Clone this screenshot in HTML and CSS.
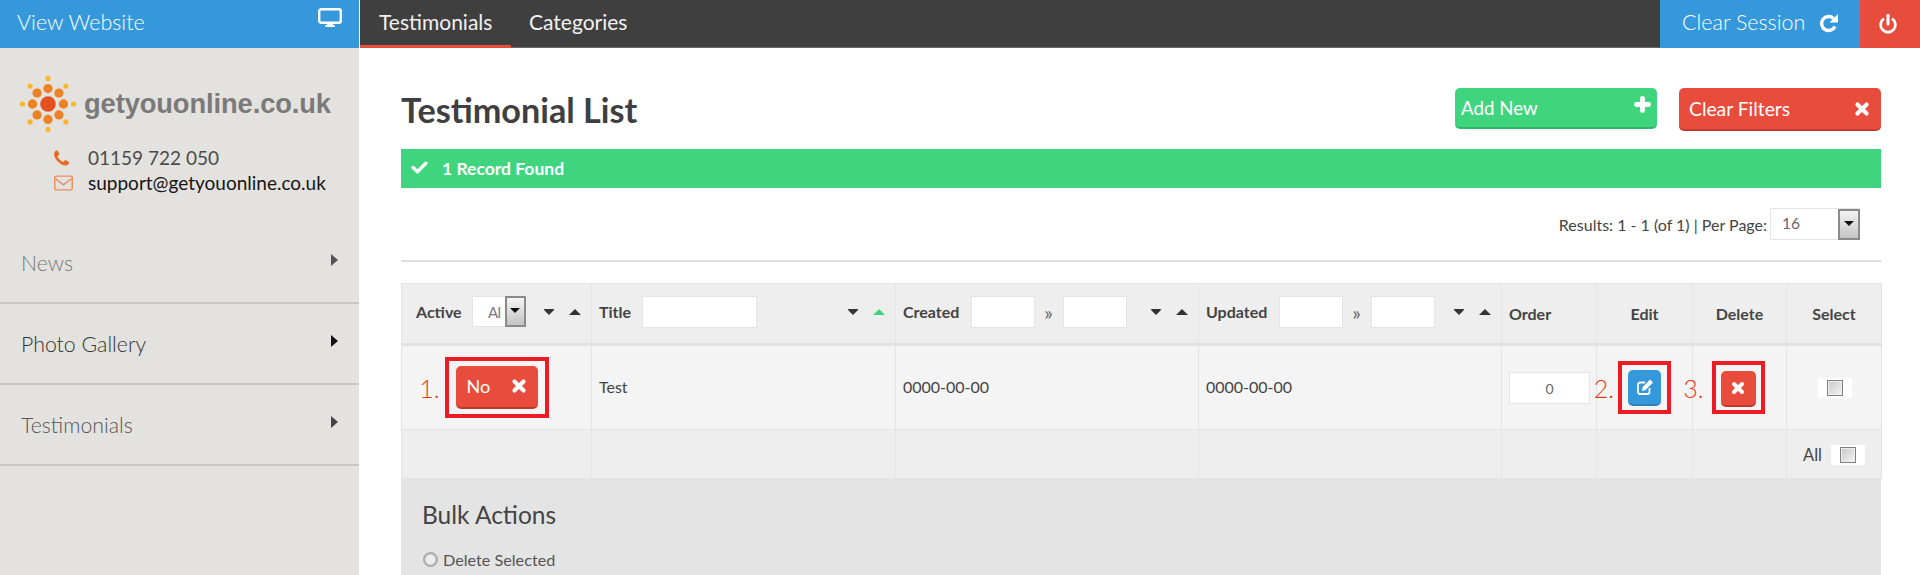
FILE: index.html
```html
<!DOCTYPE html>
<html lang="en">
<head>
<meta charset="utf-8">
<title>Testimonial List</title>
<link rel="stylesheet" href="styles.css">
</head>
<body>
<div class="app">
  <aside class="sidebar">
    <a class="view-site"><span>View Website</span>
      <svg class="ic-desktop" viewBox="0 0 24 20"><rect x="1.2" y="1.2" width="21.6" height="13.6" rx="2" fill="none" stroke="#fff" stroke-width="2.4"/><rect x="9" y="15" width="6" height="3" fill="#fff"/><rect x="7" y="17" width="10" height="2" rx="1" fill="#fff"/></svg>
    </a>
    <div class="brand">
      <svg class="sun" viewBox="0 0 60 60">
        <circle cx="30" cy="30" r="8" fill="#e2511f"/>
        <g fill="#ec8224"><circle cx="30" cy="14" r="4.8"/><circle cx="30" cy="46" r="4.8"/><circle cx="14" cy="30" r="4.8"/><circle cx="46" cy="30" r="4.8"/><circle cx="18.7" cy="18.7" r="4.8"/><circle cx="41.3" cy="18.7" r="4.8"/><circle cx="18.7" cy="41.3" r="4.8"/><circle cx="41.3" cy="41.3" r="4.8"/></g>
        <g fill="#fbb62a"><circle cx="30" cy="3.5" r="2.7"/><circle cx="30" cy="56.5" r="2.7"/><circle cx="3.5" cy="30" r="2.7"/><circle cx="56.5" cy="30" r="2.7"/><circle cx="11.5" cy="11.5" r="2.7"/><circle cx="48.5" cy="11.5" r="2.7"/><circle cx="11.5" cy="48.5" r="2.7"/><circle cx="48.5" cy="48.5" r="2.7"/></g>
      </svg>
      <span class="brand-name">getyouonline.co.uk</span>
    </div>
    <div class="contact">
      <div class="contact-row phone">
        <svg class="ic-contact" viewBox="0 0 1408 1408"><path fill="#ea6a20" d="M1408 1112q0 27-10 70.5t-21 68.5q-21 50-122 106-94 51-186 51-27 0-53-3.5t-57.5-12.5-47-14.5-55.5-20.5-49-18q-98-35-175-83-127-79-264-216t-216-264q-48-77-83-175-3-9-18-49t-20.5-55.5-14.5-47-12.5-57.5-3.5-53q0-92 51-186 56-101 106-122 25-11 68.5-21t70.5-10q14 0 21 3 18 6 53 76 11 19 30 54t35 63.5 31 53.5q3 4 17.5 25t21.5 35.5 7 28.5q0 20-28.5 50t-62 55-62 53-28.5 46q0 9 5 22.5t8.5 20.5 14 24 11.5 19q76 137 174 235t235 174q2 1 19 11.5t24 14 20.5 8.5 22.5 5q18 0 46-28.5t53-62 55-62 50-28.5q14 0 28.5 7t35.5 21.5 25 17.5q25 15 53.5 31t63.5 35 54 30q70 35 76 53 3 7 3 21z"/></svg>
        <span>01159 722 050</span>
      </div>
      <div class="contact-row mail">
        <svg class="ic-contact" viewBox="0 0 20 16"><rect x="0.8" y="0.8" width="18.4" height="14.4" rx="1.5" fill="none" stroke="#ec8a5c" stroke-width="1.5"/><path d="M1.5 3.5 L10 10 L18.5 3.5" fill="none" stroke="#ec8a5c" stroke-width="1.5"/></svg>
        <span>support@getyouonline.co.uk</span>
      </div>
    </div>
    <nav class="side-nav">
      <a class="side-item item-news"><span>News</span><i class="tri-right"></i></a>
      <a class="side-item item-photo"><span>Photo Gallery</span><i class="tri-right"></i></a>
      <a class="side-item item-test"><span>Testimonials</span><i class="tri-right"></i></a>
    </nav>
  </aside>

  <main class="main">
    <header class="topbar">
      <a class="tab tab-active">Testimonials</a>
      <a class="tab">Categories</a>
      <a class="clear-session"><span>Clear Session</span>
        <svg class="ic-refresh" viewBox="0 0 20 20"><path d="M16 13.500 A7 7 0 1 1 14.500 5.500" fill="none" stroke="#fff" stroke-width="3.400"/><path d="M19 1 V9.500 H10.500 Z" fill="#fff"/></svg>
      </a>
      <a class="logout">
        <svg class="ic-power" viewBox="0 0 20 20"><path d="M6 4.6 A7.4 7.4 0 1 0 14 4.6" fill="none" stroke="#fff" stroke-width="2.8"/><path d="M10 1 V10" stroke="#fff" stroke-width="3" stroke-linecap="round"/></svg>
      </a>
    </header>

    <div class="content">
      <div class="page-head">
        <h1>Testimonial List</h1>
        <div class="head-actions">
          <a class="btn btn-green btn-add"><span>Add New</span>
            <svg class="ic-plus" viewBox="0 0 14 14"><path d="M7 2 V12 M2 7 H12" stroke="#fff" stroke-width="4" stroke-linecap="round"/></svg>
          </a>
          <a class="btn btn-red btn-clear"><span>Clear Filters</span>
            <svg class="ic-x ic-x-big" viewBox="0 0 14 14"><path d="M3 3 L11 11 M11 3 L3 11" stroke="#fff" stroke-width="3.6" stroke-linecap="round"/></svg>
          </a>
        </div>
      </div>

      <div class="notice">
        <svg class="ic-check" viewBox="0 0 16 12"><path d="M2 6 L6 10 L14 2" fill="none" stroke="#fff" stroke-width="3.2" stroke-linecap="round" stroke-linejoin="round"/></svg>
        <span>1 Record Found</span>
      </div>

      <div class="results">
        <span>Results: 1 - 1 (of 1) | Per Page:</span>
        <span class="fake-select select-page"><span class="select-value">16</span><span class="select-btn"><i class="tri-down-sm"></i></span></span>
      </div>
      <hr class="rule">

      <table class="grid">
        <colgroup>
          <col class="c-active"><col class="c-title"><col class="c-date"><col class="c-date"><col class="c-order"><col class="c-edit"><col class="c-del"><col class="c-sel">
        </colgroup>
        <thead>
          <tr>
            <th><div class="filter filter-first"><span>Active</span>
              <span class="fake-select select-active"><span class="select-value">Al</span><span class="select-btn"><i class="tri-down-sm"></i></span></span>
              <span class="sorts"><i class="tri-down"></i><i class="tri-up"></i></span></div></th>
            <th><div class="filter"><span>Title</span><span class="field field-title"></span>
              <span class="sorts"><i class="tri-down"></i><i class="tri-up tri-on"></i></span></div></th>
            <th><div class="filter"><span>Created</span><span class="field field-date"></span><span class="raquo">»</span><span class="field field-date"></span>
              <span class="sorts"><i class="tri-down"></i><i class="tri-up"></i></span></div></th>
            <th><div class="filter"><span>Updated</span><span class="field field-date"></span><span class="raquo">»</span><span class="field field-date"></span>
              <span class="sorts"><i class="tri-down"></i><i class="tri-up"></i></span></div></th>
            <th class="th-order">Order</th>
            <th class="center">Edit</th>
            <th class="center">Delete</th>
            <th class="center">Select</th>
          </tr>
        </thead>
        <tbody>
          <tr class="row-data">
            <td class="center"><span class="mark mark-wide"><b class="step step-1">1.</b>
              <a class="btn btn-red btn-no"><span>No</span><svg class="ic-x" viewBox="0 0 14 14"><path d="M3 3 L11 11 M11 3 L3 11" stroke="#fff" stroke-width="3.6" stroke-linecap="round"/></svg></a></span></td>
            <td class="pad">Test</td>
            <td class="pad">0000-00-00</td>
            <td class="pad">0000-00-00</td>
            <td class="cell-order"><span class="order-input">0</span></td>
            <td class="center"><span class="mark mark-sq"><b class="step">2.</b>
              <a class="btn-icon btn-blue"><svg class="ic-edit" viewBox="0 0 18 18"><path d="M13.5 10 V14 A2 2 0 0 1 11.5 16 H4 A2 2 0 0 1 2 14 V6.500 A2 2 0 0 1 4 4.500 H9" fill="none" stroke="#fff" stroke-width="1.800"/><path d="M14 1.500 L17 4.500 L9.500 12 L6 13 L6.700 9 Z" fill="#fff"/></svg></a></span></td>
            <td class="center"><span class="mark mark-sq mark-del"><b class="step step-3">3.</b>
              <a class="btn-icon btn-del"><svg class="ic-x ic-x-sm" viewBox="0 0 14 14"><path d="M3 3 L11 11 M11 3 L3 11" stroke="#fff" stroke-width="4" stroke-linecap="round"/></svg></a></span></td>
            <td class="center"><span class="check-wrap check-sel"><span class="check"></span></span></td>
          </tr>
          <tr class="row-foot">
            <td></td><td></td><td></td><td></td><td></td><td></td><td></td>
            <td class="cell-all"><span class="all-label">All</span><span class="check-wrap"><span class="check"></span></span></td>
          </tr>
        </tbody>
      </table>

      <section class="bulk">
        <h2>Bulk Actions</h2>
        <label class="radio-row"><span class="radio"></span>Delete Selected</label>
      </section>
    </div>
  </main>
</div>
</body>
</html>
```

FILE: styles.css
```css
* { box-sizing: border-box; }
html, body { margin: 0; height: 100%; overflow: hidden; background: #fff; }
body { font-family: Lato, "Liberation Sans", sans-serif; color: #444; font-size: 15px; }
a { text-decoration: none; color: inherit; }
i { display: block; }

.app { display: flex; height: 575px; overflow: hidden; }

/* Sidebar */
.sidebar { width: 359px; flex: none; background: #e3e2de; }
.view-site { height: 48px; background: #3498db; color: #fff; display: flex; justify-content: space-between; padding: 0 17px; font-size: 21.500px; font-weight: 300; line-height: 44px; }
.ic-desktop { width: 24px; height: 20px; margin-top: 8px; }
.brand { display: flex; align-items: center; margin: 26px 0 0 19px; height: 60px; }
.sun { width: 58px; height: 58px; flex: none; }
.brand-name { margin-left: 7px; font-family: "Liberation Sans", sans-serif; font-weight: 700; font-size: 27.300px; color: #7b7a7a; letter-spacing: -0.1px; }
.contact { margin: 11px 0 0 54px; }
.contact-row { display: flex; align-items: center; height: 25px; font-size: 19px; }
.contact-row span { margin-left: 15px; }
.phone { color: #4b4b4b; }
.mail { color: #151515; }
.phone span { margin-left: 19px; }
.ic-contact { width: 19px; height: 16px; flex: none; }
.phone .ic-contact { width: 15px; height: 16px; }
.side-nav { margin-top: 28px; }
.side-item { display: flex; justify-content: space-between; align-items: center; height: 81px; padding: 0 21px; border-bottom: 2px solid #c8c7c4; font-size: 21.300px; font-weight: 300; }
.item-news { color: #777; }
.item-photo { color: #333; }
.item-test { color: #555; }
.tri-right { width: 0; height: 0; border-left: 7px solid #333; border-top: 6.500px solid transparent; border-bottom: 6.500px solid transparent; margin: -6px 0 0; }
.item-news .tri-right { border-left-color: #555; }
.item-photo .tri-right { border-left-color: #111; }
.item-test .tri-right { border-left-color: #444; }

/* Top bar */
.main { flex: 1; min-width: 0; margin-left: 1px; }
.topbar { height: 48px; background: #3f3f3f; display: flex; border-bottom: 1px solid #666; color: #fff; }
.tab { padding: 0 20px; font-size: 21px; line-height: 44px; font-weight: 400; color: #f1f1f1; height: 48px; margin-bottom: -1px; }
.tab + .tab { padding: 0 18px; }
.tab-active { border-bottom: 3px solid #e74c3c; width: 151px; padding: 0 19px; }
.clear-session { margin-left: auto; width: 200px; height: 48px; background: #3498db; display: flex; align-items: center; padding: 0 21px 4px 22px; font-size: 21.500px; font-weight: 300; justify-content: space-between; margin-bottom: -1px; }
.ic-refresh { width: 20px; height: 20px; margin-top: 2px; }
.logout { width: 60px; height: 48px; background: #e74c3c; display: flex; justify-content: center; padding-top: 14px; padding-right: 4px; margin-bottom: -1px; }
.ic-power { width: 20px; height: 20px; }

/* Content */
.content { padding: 40px 39px 0 41px; }
.page-head { display: flex; justify-content: space-between; align-items: flex-start; height: 43px; }
h1 { margin: 0; font-size: 34.200px; font-weight: 700; line-height: 44px; color: #3f3f41; }
.head-actions { display: flex; gap: 22px; }
.btn { display: flex; align-items: center; justify-content: space-between; color: #fff; border-radius: 5px; }
.btn-green { background: #3fd57f; border-bottom: 2px solid #2eb868; }
.btn-red { background: #e74c3c; border-bottom: 2px solid #c0392b; }
.btn-add { width: 202px; height: 41px; padding: 0 6px; font-size: 18.700px; }
.btn-clear { width: 202px; height: 43px; padding: 0 10px; font-size: 19.300px; }
.ic-plus { width: 17px; height: 17px; margin-bottom: 6px; }
.ic-x { width: 16px; height: 16px; flex: none; }
.ic-x-big { width: 16px; height: 16px; margin-right: 1px; }
.notice { margin-top: 18px; height: 39px; background: #3fd57f; color: #fff; display: flex; align-items: center; padding: 0 10px; font-weight: 700; font-size: 17.500px; }
.ic-check { width: 17px; height: 13px; margin-bottom: 2px; margin-right: 14px; }
.results { margin-top: 20px; height: 32px; padding-right: 21px; display: flex; justify-content: flex-end; align-items: center; gap: 3px; font-size: 16px; color: #444; }
.fake-select { display: inline-flex; background: #fff; border: 1px solid #e4e4e4; color: #666; }
.select-page { width: 90px; height: 32px; }
.select-page .select-value { flex: 1; padding: 5px 0 0 11px; font-size: 15.500px; }
.select-btn { width: 22px; margin: 0 -1px -1px 0; border: 2px solid #8a8a8a; background: linear-gradient(#f4f4f4, #c4c4c4); display: flex; align-items: center; justify-content: center; }
.tri-down-sm { width: 0; height: 0; border-top: 5px solid #111; border-left: 5px solid transparent; border-right: 5px solid transparent; margin-bottom: 3px; }
.rule { margin: 20px 0 0; border: 0; height: 2px; background: #dcdcdc; }

/* Table */
.grid { margin-top: 21px; width: 100%; border-collapse: collapse; table-layout: fixed; font-size: 15px; color: #444; }
.c-active { width: 190px; } .c-title { width: 304px; } .c-date { width: 303px; } .c-order { width: 95px; } .c-edit { width: 96px; } .c-del { width: 94px; } .c-sel { width: 95px; }
.grid th, .grid td { border: 1px solid #e4e4e4; padding: 0; }
.grid th { height: 61px; background: #eee; font-weight: 700; font-size: 16px; text-align: left; border-bottom: 3px solid #e2e2e2; color: #444; }
.grid th.center, .grid td.center { text-align: center; }
.th-order { padding-left: 7px !important; }
.filter { display: flex; align-items: center; padding: 0 10px 4px 7px; }
.filter-first { padding-left: 14px; }
.sorts { margin-left: auto; display: flex; gap: 14px; align-items: center; }
.tri-down { width: 0; height: 0; border-top: 6px solid #333; border-left: 6px solid transparent; border-right: 6px solid transparent; border-radius: 2px; }
.tri-up { width: 0; height: 0; border-bottom: 6px solid #333; border-left: 6px solid transparent; border-right: 6px solid transparent; }
.tri-on { border-bottom-color: #3fd57f; }
.select-active { width: 54px; height: 31px; margin-left: 10px; font-weight: 400; }
.select-active .select-value { flex: 1; text-align: right; padding: 6px 4px 0 0; font-size: 15px; color: #778; letter-spacing: -0.500px; }
.select-active .select-btn { width: 21px; margin: -1px -1px -1px 0; }
.field { display: block; height: 32px; background: #fff; border: 1px solid #e4e4e4; }
.field-title { width: 115px; margin-left: 11px; }
.field-date { width: 64px; margin-left: 12px; }
.raquo + .field-date { margin-left: 10px; }
.raquo { margin-left: 9px; font-weight: 400; color: #666; font-size: 20px; line-height: 20px; }

.row-data td { height: 85px; background: #f4f4f4; }
.row-foot td { height: 49px; background: #eee; }
.pad { padding: 0 0 2px 7px !important; }
.grid tbody td { font-size: 16px; }

.mark { position: relative; display: inline-flex; align-items: center; justify-content: center; border: 4px solid #ed1c24; vertical-align: middle; }
.mark-wide { width: 104px; height: 61px; }
.mark-sq { width: 53px; height: 53px; }
.mark-del { margin-right: 3px; }
.step { position: absolute; right: calc(100% + 8px); top: 50%; transform: translateY(-50%); font-weight: 300; font-size: 25px; color: #e63a10; line-height: 1; white-space: nowrap; }
.step-1 { right: calc(100% + 9px); }
.step-3 { right: calc(100% + 12px); }
.btn-no { width: 82px; height: 43px; padding: 0 11px 2px 11px; font-size: 18px; }
.btn-icon { display: flex; align-items: center; justify-content: center; border-radius: 5px; width: 33px; height: 36px; }
.btn-blue { background: #3498db; border-bottom: 2px solid #2b83bd; }
.btn-del { background: #e74c3c; border-bottom: 2px solid #c0392b; width: 35px; margin-top: 2px; }
.ic-edit { width: 18px; height: 18px; }
.ic-x-sm { width: 14px; height: 14px; }
.cell-order { padding-left: 7px !important; }
.order-input { display: block; width: 81px; height: 32px; background: #fff; border: 1px solid #e4e4e4; text-align: center; color: #666; font-size: 14px; line-height: 32px; }
.check-wrap { display: inline-flex; align-items: center; justify-content: center; width: 34px; height: 20px; background: #fff; vertical-align: middle; }
.check-sel { margin-left: 2px; }
.check { display: block; width: 16px; height: 16px; border: 1px solid #808080; background: linear-gradient(135deg, #c8c8c8, #f4f4f4); box-shadow: inset 0 0 0 1px #eee; }
.cell-all { text-align: right; padding-right: 16px !important; }
.all-label { margin-right: 9px; font-size: 16.500px; font-weight: 400; vertical-align: middle; }

/* Bulk */
.bulk { background: #e4e4e4; height: 98px; padding: 22px 21px 0; }
h2 { margin: 0; font-size: 24.500px; font-weight: 400; color: #444; line-height: 28px; }
.radio-row { display: flex; align-items: center; margin-top: 21px; font-size: 16.200px; color: #555; }
.radio { width: 15px; height: 15px; border-radius: 50%; border: 2px solid #aaa; background: radial-gradient(#eee 40%, #ccc); margin: 0 5px 0 1px; }
```
